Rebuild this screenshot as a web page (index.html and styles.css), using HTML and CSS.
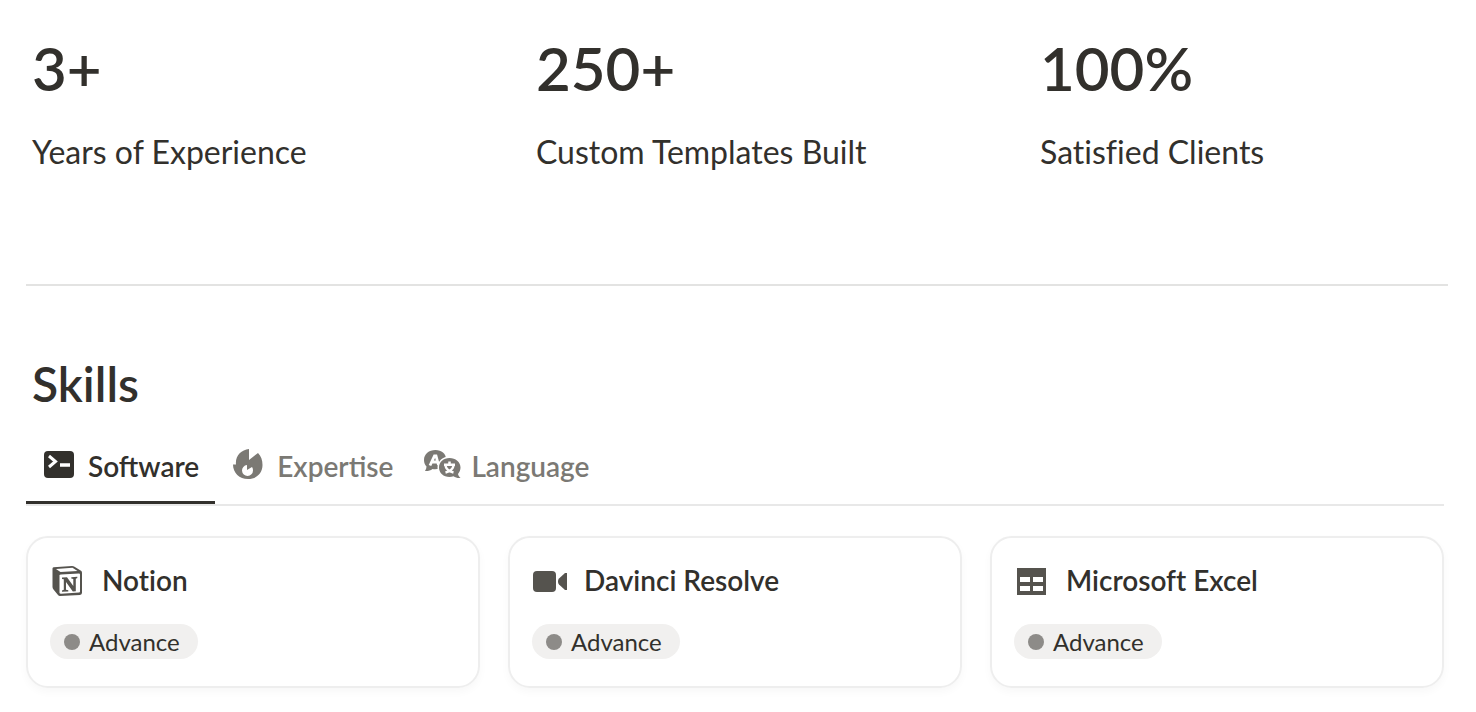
FILE: index.html
```
<!DOCTYPE html>
<html lang="en">
<head>
  <meta charset="UTF-8">
  <meta name="viewport" content="width=device-width, initial-scale=1.0">
  <title>Skills</title>
  <link rel="stylesheet" href="styles.css">
</head>
<body>
  <main class="page">
    <section class="stats">
      <div class="stat">
        <h2>3+</h2>
        <p>Years of Experience</p>
      </div>
      <div class="stat">
        <h2>250+</h2>
        <p>Custom Templates Built</p>
      </div>
      <div class="stat">
        <h2>100%</h2>
        <p>Satisfied Clients</p>
      </div>
    </section>

    <hr class="divider">

    <section class="skills">
      <h1>Skills</h1>

      <div class="tabs" role="tablist">
        <button type="button" class="tab active" role="tab" aria-selected="true">
          <svg class="tab-icon" viewBox="0 0 38 38" aria-hidden="true">
            <rect x="4" y="6" width="30" height="27" rx="4" fill="currentColor"/>
            <path d="M9 11l6.500 5.500L9 22" fill="none" stroke="#fff" stroke-width="3"/>
            <path d="M20 20h10" stroke="#fff" stroke-width="3.500"/>
          </svg>
          <span>Software</span>
        </button>
        <button type="button" class="tab" role="tab" aria-selected="false">
          <svg class="tab-icon" viewBox="0 0 38 38" aria-hidden="true">
            <path d="M20 4v11l9-7c3 3 4.500 7 4.500 12 0 8-6 14-14.500 14S4 28 4 19.500h3C6 11 12 5 20 4z" fill="currentColor"/>
            <path d="M18 20v5l5-3c.7 1 1 2 1 3.500a5.500 5.500 0 1 1-6-5.500z" fill="#fff"/>
          </svg>
          <span>Expertise</span>
        </button>
        <button type="button" class="tab" role="tab" aria-selected="false">
          <svg class="tab-icon" viewBox="0 0 38 38" aria-hidden="true">
            <path d="M12.500 5C6 5 1 9 1 15c0 3 1 5 2.500 6.500 0 1.500-.5 3-1.500 4.500 3 .2 5.500-.5 7.500-2 7 1 13.500-2 13.500-10C23 8.500 18.500 5 12.500 5z" fill="currentColor"/>
            <path d="M7 20.500l4.500-9.500h1.500l2.500 9M9.500 17h5" fill="none" stroke="#fff" stroke-width="2.800"/>
            <path d="M26.500 13C20.500 13 16 17 16 22.500S20.500 32 26.500 32c1.500 0 2.500-.2 4-.7 2 1.500 4.500 2 7 1.700-1.500-1.200-2.200-2.500-2.500-4 1.500-1.800 2.500-4 2.500-6.500 0-5.500-5-9.500-11-9.500z" fill="currentColor" stroke="#fff" stroke-width="3" paint-order="stroke"/>
            <path d="M26.500 16.500v3M21 19.700h11M22.500 21c1 3.500 4 5.500 8 6.500M30.500 21c-1 3.500-4 5.500-8 6.500" fill="none" stroke="#fff" stroke-width="2.500"/>
          </svg>
          <span>Language</span>
        </button>
      </div>

      <div class="cards">
        <article class="card">
          <div class="card-title">
            <svg class="card-icon" viewBox="0 -1 36 36" aria-hidden="true">
              <path d="M2.500 5.500q0-1 1-1.200L22 3q1.500 0 2.500.7l6.500 4q1 .7 1 2v20q0 2-2 2.200L10 33q-1.300 0-2-1l-4.500-5.500q-1-1.200-1-2.500z" fill="currentColor"/>
              <path d="M6 6l16.500-1.200L27.500 8 10.500 9z" fill="#fff"/>
              <path d="M9.500 12.500q0-1 1.500-1.100l18-.9q1 0 1 1v17q0 1-1 1.100L11 30.700q-1.500 0-1.500-1z" fill="#fff"/>
              <path d="M12 14.500l5-.3 6.300 8.800v-7l-2-.5v-1.300l6-.4V15l-1.500.7v12.500l-3 .2L16 18.900v7.900l2.300.5v1.200l-6.300.3v-1.200l1.800-.8V16.200l-1.800-.3z" fill="currentColor"/>
            </svg>
            <h3>Notion</h3>
          </div>
          <div class="status"><i class="dot"></i>Advance</div>
        </article>

        <article class="card">
          <div class="card-title">
            <svg class="card-icon" viewBox="0 -1 36 36" aria-hidden="true">
              <rect x="1" y="8" width="23" height="21" rx="4" fill="currentColor"/>
              <path d="M35 10v17h-2L27 21.500q-1-1-1-3t1-3L33 10z" fill="currentColor"/>
            </svg>
            <h3>Davinci Resolve</h3>
          </div>
          <div class="status"><i class="dot"></i>Advance</div>
        </article>

        <article class="card">
          <div class="card-title">
            <svg class="card-icon" viewBox="0 -1 36 36" aria-hidden="true">
              <path d="M3 5h29v27H3z" fill="currentColor"/>
              <path d="M6 14h10v5H6zM19 14h10v5H19zM6 23h10v5H6zM19 23h10v5H19z" fill="#fff"/>
            </svg>
            <h3>Microsoft Excel</h3>
          </div>
          <div class="status"><i class="dot"></i>Advance</div>
        </article>
      </div>
    </section>
  </main>
</body>
</html>
```
FILE: styles.css
```
* {
  box-sizing: border-box;
}
body {
  margin: 0;
  background: #fff;
  color: #32302c;
  font-family: Lato, "Liberation Sans", sans-serif;
  font-variant-ligatures: none;
}
h1, h2, h3, p {
  margin: 0;
}
.page {
  padding: 30px 28px 24px 26px;
}
.stats {
  display: grid;
  grid-template-columns: repeat(3, 1fr);
  gap: 96px;
  padding-left: 6px;
}
.stat h2 {
  font-size: 60px;
  line-height: 76px;
  font-weight: 600;
}
.stat p {
  margin-top: 26px;
  font-size: 32px;
  line-height: 40px;
}
.divider {
  margin: 112px 0 0;
  border: 0;
  border-top: 2px solid #e3e3e2;
}
.skills {
  padding-right: 4px;
}
.skills h1 {
  margin-top: 68px;
  padding-left: 6px;
  font-size: 48px;
  line-height: 60px;
  font-weight: 600;
}
.tabs {
  display: flex;
  margin-top: 20px;
  border-bottom: 2px solid #e8e8e8;
}
.tab {
  display: flex;
  align-items: center;
  gap: 10px;
  height: 70px;
  padding: 0 16px 4px 14px;
  border: 0;
  border-bottom: 3px solid transparent;
  background: none;
  color: #7b7974;
  font-family: inherit;
  font-size: 28px;
  line-height: 32px;
  font-weight: 600;
  cursor: pointer;
}
.tab.active {
  color: #32302c;
  border-bottom-color: #32302c;
}
.tab span {
  overflow: hidden;
}
.tab-icon {
  width: 38px;
  height: 38px;
  margin-bottom: 4px;
}
.cards {
  display: grid;
  grid-template-columns: repeat(3, 1fr);
  gap: 28px;
  margin-top: 30px;
}
.card {
  padding: 24px 22px 27px;
  border: 2px solid #eee;
  border-radius: 22px;
  box-shadow: 0 4px 8px rgba(0, 0, 0, 0.03);
}
.card-title {
  display: flex;
  align-items: center;
  gap: 16px;
}
.card-icon {
  width: 36px;
  height: 36px;
  color: #55534e;
}
.card h3 {
  font-size: 28px;
  line-height: 36px;
  font-weight: 600;
}
.status {
  display: inline-flex;
  align-items: center;
  gap: 9px;
  height: 35px;
  margin-top: 26px;
  padding: 0 18px 0 14px;
  border-radius: 18px;
  background: #f1f0ef;
  font-size: 24px;
}
.dot {
  width: 16px;
  height: 16px;
  border-radius: 50%;
  background: #8d8b88;
}
```
